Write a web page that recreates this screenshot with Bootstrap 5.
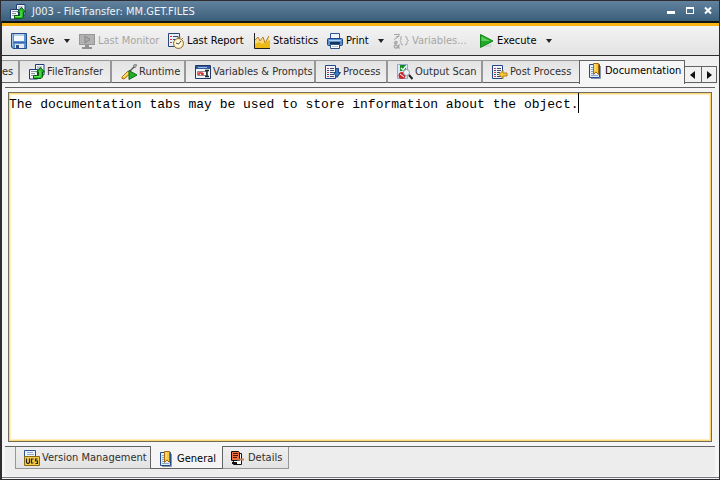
<!DOCTYPE html>
<html lang="en">
<head>
<meta charset="utf-8">
<meta name="viewport" content="width=device-width, initial-scale=1">
<title>J003 - FileTransfer: MM.GET.FILES</title>
<link rel="stylesheet" href="https://cdn.jsdelivr.net/npm/bootstrap@5.3.0/dist/css/bootstrap.min.css">
<style>
:root { --line: #626262; --soft: #979797; --frame: #2e2c31; }
body { font: 11px/16px "DejaVu Sans Condensed", "DejaVu Sans", Tahoma, sans-serif; color: #303030; background: #f5f5f5; }
button { font: inherit; color: inherit; border: 0; background: none; padding: 0; white-space: nowrap; }
svg { display: block; flex: none; }
.window-frame { border: 1px solid var(--frame); border-left-width: 2px; min-height: 0; }
.titlebar { height: 20px; background: linear-gradient(#62829e, #3a5f7a); color: #eef3f6; padding: 2px 6px 0 9px; margin-left: -1px; gap: 6px; }
.titlebar h1 { font: inherit; }
.tools-wrap { border-top: 2px solid #111; }
.tools { display: grid; grid-template-columns: 50px 18px 89px 86px 73px 48px 18px 87px 63px 18px; align-items: center;
  height: 33px; padding-left: 9px; border-top: 3px solid #f6b316; border-bottom: 1px solid #2d2d2d; background: linear-gradient(#f3f3f3, #e3e3e3); }
.tool { display: flex; align-items: center; gap: 3px; color: #000; }
.tool:disabled { color: #a6a6a6; }
.drop { display: flex; align-items: center; padding-left: 3px; }
.drop::after { content: ""; border: 3px solid transparent; border-top: 4px solid #222; border-bottom: 0; }
.tabs-top { display: grid; grid-template-columns: 18px 92px 74px 130px 72px 95px 96px 106px 17px 15px; padding-top: 4px; background: #f0f0f0; height: 28px; }
.tab-btn { display: flex; align-items: center; gap: 2px; }
.tabs-top .tab-btn { height: 23px; padding: 1px 0 0 9px; border-top: 1px solid var(--soft); border-right: 2px solid var(--soft); border-bottom: 1px solid var(--line);
  background: linear-gradient(#e3e3e3, #f0f0f0); }
.tabs-top .tab-btn:first-child { padding-left: 0; }
.tabs-top .tab-btn.before-on { border-right: 0; }
.tabs-top .tab-btn.on { height: 24px; padding: 0 0 4px 8px; border: 1px solid var(--line); border-bottom: 0; background: #f5f5f5; color: #000; gap: 3px; }
.scroll-btn { height: 17px; border: 1px solid var(--line); border-left: 0; align-self: start; margin-top: 6px; display: flex; align-items: center; justify-content: center; background: #f1f1f1; }
.pane { border-top: 1px solid var(--line); border-bottom: 1px solid var(--line); margin: 3px 4px 0 3px; padding: 4px 3px; min-height: 0; }
.edit-box { border: 1px solid #6f6b5e; position: relative; min-height: 0; }
.editor { font: 13px/17px "Liberation Mono", "Courier New", monospace; color: #000; background: #fff; border: 0; resize: none; outline: 0;
  width: 100%; height: 100%; display: block; padding: 3px 1px 0 0; box-shadow: inset 0 0 0 1px #fbd775, inset 0 0 0 2px #fdeebb; overflow: hidden; }
.cursor { font: 13px/17px "Liberation Mono", "Courier New", monospace; position: absolute; left: 73ch; top: 0; width: 1px; height: 20px; background: #000; }
.tabs-bottom { margin: 0 4px 0 3px; padding: 0 10px 6px; height: 29px; display: grid; grid-template-columns: 135px 73px 66px; background: #ededed; align-items: start; }
.tabs-bottom .tab-btn { height: 22px; padding-left: 7px; border: 1px solid var(--soft); border-top: 0; background: linear-gradient(#efefef, #e3e3e3); gap: 3px; }
.tabs-bottom .tab-btn:first-child { border-right: 0; gap: 2px; }
.tabs-bottom .tab-btn.on { height: 23px; padding: 3px 0 0 8px; margin-top: -1px; background: #f5f5f5; border-color: var(--line); color: #000; gap: 4px; }
.tabs-bottom .tab-btn:last-child { border-left: 0; }
.base { border-top: 1px solid #77757a; height: 2px; margin-top: 1px; }
</style>
<script src="https://cdn.jsdelivr.net/npm/bootstrap@5.3.0/dist/js/bootstrap.bundle.min.js"></script>
</head>
<body>
<svg class="d-none" aria-hidden="true">
  <symbol id="i-transfer" viewBox="0 0 16 16">
    <path d="M6.500 .5h8.500v10.500h-8.500z" fill="#f4f6fa" stroke="#1d3c78"/><path d="M8 3h5M8 5h5M8 7h3" stroke="#8a93a4"/>
    <path d="M.5 5.500h8v9.500h-8z" fill="#f4f6fa" stroke="#1d3c78"/><path d="M2 7.500h5M2 9.500h4M2 11.500h3" stroke="#8a93a4"/>
    <path d="M4.500 11.500h5V8H7.500l4-4.500 4 4.500h-2v5l-1.500 1.500H4.500z" fill="#22c024" stroke="#07590d"/><path d="M5 12.500h6V7" fill="none" stroke="#68e55c"/>
  </symbol>
  <symbol id="i-save" viewBox="0 0 16 16">
    <path d="M.5 .5h15v15H2l-1.500-1.500z" fill="#5f92ce" stroke="#234f8d"/><path d="M3 1h10v7H3z" fill="#f5f8fc"/><path d="M3 1h10v2H3z" fill="#b8cfe8"/><path d="M1 9.500h14" stroke="#386ba8"/>
    <path d="M4 11h9v4H4z" fill="#e5e8ed"/><path d="M5 12h3v3H5z" fill="#2b4d80"/><path d="M1 1h1v12H1z" fill="#9bc0e8"/>
  </symbol>
  <symbol id="i-monitor" viewBox="0 0 16 16">
    <path d="M0 1h16v11H0z" fill="#979797"/><path d="M1 2h14v9H1z" fill="#b2b2b2"/><path d="M6 3l5 3.500L6 10z" fill="#aaa" stroke="#858585"/><path d="M6 12h4v2h3v2H3v-2h3z" fill="#929292"/>
  </symbol>
  <symbol id="i-report" viewBox="0 0 16 16">
    <path d="M.5 .5h11v13H.5z" fill="#e6eefa" stroke="#29477f"/><path d="M2 3.500h2M2 6.500h2M2 9.500h2" stroke="#d33"/><path d="M5 3.500h5M5 6.500h5M5 9.500h2" stroke="#374d77"/>
    <circle cx="10.500" cy="10.500" r="5" fill="#f8e6a8" stroke="#8b7340"/><circle cx="10.500" cy="10.500" r="3.500" fill="#fff8dd"/><path d="M13 8l-2.500 3L8 10" fill="none" stroke="#444"/><path d="M10 4h2v1h-2zM14 5l1 1" fill="#8b7340" stroke="#8b7340"/>
  </symbol>
  <symbol id="i-stats" viewBox="0 0 16 16">
    <path d="M1 14V7l3-3 2 5 3-4 2 5 2-4 2-4v12z" fill="#f9dc7a"/><path d="M1 7l3-3 2 4 3-4 2 6 4-7" fill="none" stroke="#b97b2d"/><path d="M1 11l4-2 3 2 8-4v8H1z" fill="#edb914"/><path d="M.5 0v15.500H16" fill="none" stroke="#202020"/>
  </symbol>
  <symbol id="i-print" viewBox="0 0 16 16">
    <path d="M3.500 6V.5h9V6" fill="#f2f6fc" stroke="#2c5693"/><rect x=".5" y="5.500" width="15" height="7" rx="1" fill="#5c91d1" stroke="#1c4582"/><path d="M2 7.500h12" stroke="#b0d1f5"/><path d="M3 9h10v2H3z" fill="#18345e"/><path d="M3.500 11.500h9v4h-9z" fill="#fff" stroke="#315487"/><path d="M5 13.500h6" stroke="#b5c3d8"/>
  </symbol>
  <symbol id="i-vars" viewBox="0 0 16 16">
    <g fill="none" stroke="#a5a5a5"><path d="M1 1.500h5M5 4L1 6.500M3 3.500h3v-3M9 3.500q-2 0-1 2.500 0 1-1 1.500 1 .5 1 2 0 2.500 2 2.500M12 3.500q2.500 0 2 2.500 0 1 1.500 1.500-1.500 .5-1.500 2 .5 2.500-2 2.500"/><path d="M6.500 15.500L1.500 10q0-1.500 1.500-1.500t1 1.500l-2.500 2.500q-.5 2.500 1.500 2.500 2 0 3.500-3.500" stroke-width="1.300"/></g>
  </symbol>
  <symbol id="i-run" viewBox="0 0 14 16">
    <path d="M2 14l9-3 1 3z" fill="#d3d6d3"/><path d="M.5 1.500L13 8 .5 14.500z" fill="#22a82a" stroke="#14851b"/><path d="M1.500 3.500L10 8H1.500z" fill="#62d157"/>
  </symbol>
  <symbol id="i-runtime" viewBox="0 0 16 16">
    <path d="M7 9l7-7" stroke="#5b5b5b" stroke-width="1.500"/><path d="M12 2l2-2 2 1-2 3z" fill="#a9a9a9" stroke="#555" stroke-width=".5"/><path d="M1 13l6-6 3 2-7 6q-3 0-2-2z" fill="#f7c434" stroke="#aa7418"/><path d="M2 13l5-4" stroke="#fff2a0"/><path d="M8 6.500l8 4.500-8 4.500z" fill="#24ad26" stroke="#0d6c18"/>
  </symbol>
  <symbol id="i-prompt" viewBox="0 0 16 16">
    <path d="M.5 1.500h15v13H.5z" fill="#f5f7fb" stroke="#1d3768"/><path d="M1 2h14v3H1z" fill="#315a9c"/><path d="M3 3.500h9" stroke="#9bbbe5"/><path d="M2.500 7.500h9v4h-9z" fill="#fff" stroke="#8c8c8c"/><path d="M4 11V9h3v2M8 11V9" stroke="#d22" stroke-width="1.500" fill="none"/><path d="M10 6.500h4M12 6.500v6M10 12.500h4" stroke="#222" stroke-width="1.500"/>
  </symbol>
  <symbol id="i-list" viewBox="0 0 16 16">
    <path d="M.5 1.500h10v13H.5z" fill="#f1f5fb" stroke="#25488a"/><path d="M2 4.500h2M2 8.500h2M2 12.500h2" stroke="#ce4040"/><path d="M2 6.500h2M2 10.500h2M5 4.500h4M5 6.500h4M5 8.500h3M5 10.500h4M5 12.500h4" stroke="#3b4b68"/>
  </symbol>
  <symbol id="i-scan" viewBox="0 0 16 16">
    <path d="M.5 .5h10v14H.5z" fill="#d7e7f8" stroke="#91aacb"/><path d="M3 1h6v6H3z" fill="#168e25"/><path d="M4 4l2 2 3-4" fill="none" stroke="#fff" stroke-width="1.300"/><circle cx="5" cy="11.500" r="3.500" fill="#c7282c"/><path d="M3 10l4 3" stroke="#fff"/><circle cx="9.500" cy="8.500" r="3" fill="#eaf4fc" stroke="#929ba6"/><path d="M12 11l3.500 4" stroke="#222" stroke-width="2"/>
  </symbol>
  <symbol id="i-doc" viewBox="0 0 14 16">
    <path d="M1.500 1.500h10v13h-10z" fill="#e4edf8" stroke="#244a8b"/><path d="M12.500 3v12.500H3" fill="none" stroke="#8796b0"/><path d="M3 4.500h2M3 6.500h2M3 8.500h2M3 10.500h2M3 12.500h7" stroke="#86a4cc"/><path d="M5.500 .5h5v11L8 9l-2.500 2.500z" fill="#f7c63b" stroke="#a56b13"/><path d="M7 1v7" stroke="#ffed93"/>
  </symbol>
  <symbol id="i-vcs" viewBox="0 0 17 16">
    <path d="M1.500 .5h11v12h-11z" fill="#eff5fc" stroke="#2d5291"/><path d="M4 2.500h6M4 4.500h7" stroke="#8fa7c8"/><path d="M1.500 6.500h15v9h-15z" fill="#f4cd43" stroke="#8c681a"/><path d="M3.500 8.500v4l1 1h1l1-1v-4M10.500 9h-2v4h2M14.500 9h-2v2h2v2.500h-2" fill="none" stroke="#222" stroke-width="1.200"/>
  </symbol>
  <symbol id="i-detail" viewBox="0 0 15 16">
    <path d="M3.500 3.500h8v11h-8z" fill="#fff" stroke="#111"/><path d="M1.500 1.500h7l1 1v8h-8z" fill="#f0703c" stroke="#111"/><path d="M3 3.500h5M3 5.500h5M3 7.500h4" stroke="#4d1710"/><path d="M7 9.500h7" stroke="#bd8157" stroke-width="2"/><path d="M2 13h5" stroke="#111" stroke-width="2"/>
  </symbol>
</svg>

<div class="window-frame vh-100 d-flex flex-column">
  <header class="titlebar d-flex align-items-center">
    <svg width="16" height="16"><use href="#i-transfer"/></svg>
    <h1 class="m-0 flex-grow-1">J003 - FileTransfer: MM.GET.FILES</h1>
    <div class="d-flex gap-2">
      <button type="button" aria-label="Minimize"><svg width="11" height="12"><path d="M2 5h8v3H2z" fill="#fff"/></svg></button>
      <button type="button" aria-label="Maximize"><svg width="11" height="12"><path d="M2 1h8v7H2zM3 3v4h6V3z" fill="#fff" fill-rule="evenodd"/></svg></button>
      <button type="button" aria-label="Close"><svg width="10" height="12"><path d="M2 1.500l6 6M8 1.500l-6 6" stroke="#fff" stroke-width="2"/></svg></button>
    </div>
  </header>

  <div class="tools-wrap">
    <div class="tools" role="toolbar" aria-label="Object">
      <button type="button" class="tool"><svg width="16" height="16"><use href="#i-save"/></svg>Save</button>
      <button type="button" class="drop" aria-label="Save options"></button>
      <button type="button" class="tool" disabled><svg width="16" height="16"><use href="#i-monitor"/></svg>Last Monitor</button>
      <button type="button" class="tool"><svg width="16" height="16"><use href="#i-report"/></svg>Last Report</button>
      <button type="button" class="tool"><svg width="16" height="16"><use href="#i-stats"/></svg>Statistics</button>
      <button type="button" class="tool"><svg width="16" height="16"><use href="#i-print"/></svg>Print</button>
      <button type="button" class="drop" aria-label="Print options"></button>
      <button type="button" class="tool" disabled><svg width="16" height="16"><use href="#i-vars"/></svg>Variables...</button>
      <button type="button" class="tool"><svg width="14" height="16"><use href="#i-run"/></svg>Execute</button>
      <button type="button" class="drop" aria-label="Execute options"></button>
    </div>
  </div>

  <div class="tabs-top" role="tablist" aria-label="Object pages">
    <button type="button" role="tab" class="tab-btn">es</button>
    <button type="button" role="tab" class="tab-btn"><svg width="16" height="16"><use href="#i-transfer"/></svg>FileTransfer</button>
    <button type="button" role="tab" class="tab-btn"><svg width="16" height="16"><use href="#i-runtime"/></svg>Runtime</button>
    <button type="button" role="tab" class="tab-btn"><svg width="16" height="16"><use href="#i-prompt"/></svg>Variables &amp; Prompts</button>
    <button type="button" role="tab" class="tab-btn"><svg width="16" height="16"><use href="#i-list"/><path d="M10.500 4.500h3v4h2L12 13.500 8.500 8.500h2z" fill="#3e77c2" stroke="#1d477f"/></svg>Process</button>
    <button type="button" role="tab" class="tab-btn"><svg width="16" height="16"><use href="#i-scan"/></svg>Output Scan</button>
    <button type="button" role="tab" class="tab-btn before-on"><svg width="16" height="16"><use href="#i-list"/><path d="M7 10.500l4-4v2.500h4v3h-4v2.500z" fill="#f9cb39" stroke="#b17c16"/></svg>Post Process</button>
    <button type="button" role="tab" class="tab-btn on" aria-selected="true"><svg width="14" height="16"><use href="#i-doc"/></svg>Documentation</button>
    <button type="button" class="scroll-btn" aria-label="Scroll tabs left"><svg width="6" height="10"><path d="M5 1v8L0 5z" fill="#111"/></svg></button>
    <button type="button" class="scroll-btn" aria-label="Scroll tabs right"><svg width="6" height="10"><path d="M1 1v8l5-4z" fill="#111"/></svg></button>
  </div>

  <main class="pane flex-grow-1 d-flex flex-column">
    <div class="edit-box flex-grow-1">
      <textarea class="editor" aria-label="Documentation" spellcheck="false">The documentation tabs may be used to store information about the object.</textarea>
      <span class="cursor" aria-hidden="true"></span>
    </div>
  </main>

  <div class="tabs-bottom" role="tablist" aria-label="Documentation pages">
    <button type="button" role="tab" class="tab-btn"><svg width="17" height="16"><use href="#i-vcs"/></svg>Version Management</button>
    <button type="button" role="tab" class="tab-btn on" aria-selected="true"><svg width="14" height="16"><use href="#i-doc"/></svg>General</button>
    <button type="button" role="tab" class="tab-btn"><svg width="15" height="16"><use href="#i-detail"/></svg>Details</button>
  </div>
  <div class="base"></div>
</div>
</body>
</html>
